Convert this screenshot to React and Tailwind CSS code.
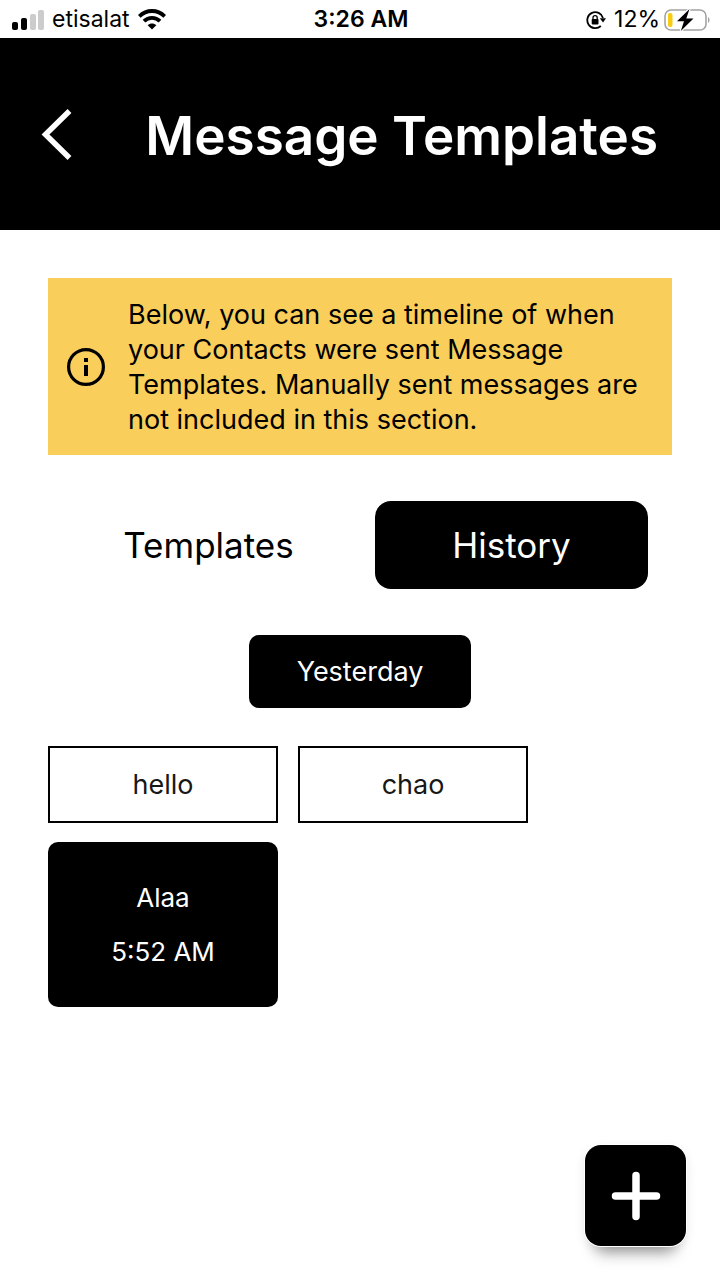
function SignalIcon() {
  return (
    <svg width="32" height="20" viewBox="0 0 32 20" aria-hidden="true">
      <rect x="0" y="12" width="6" height="8" rx="2" fill="#000" />
      <rect x="9" y="8" width="6" height="12" rx="2" fill="#000" />
      <rect x="18" y="4" width="6" height="16" rx="2" fill="#ccc" />
      <rect x="26" y="0" width="6" height="20" rx="2" fill="#ccc" />
    </svg>
  );
}

function WifiIcon() {
  return (
    <svg width="28" height="21" viewBox="0 0 28 21" fill="none" stroke="#000" strokeWidth="3.8" aria-hidden="true">
      <path d="M1.3 7.3C8.5.2 19.5.2 26.7 7.3" />
      <path d="M6 12.1C10.5 7.7 17.500 7.7 22 12.1" />
      <path d="M14 20.6L9.700 16.3C12.1 14 15.9 14 18.3 16.3Z" fill="#000" stroke="none" />
    </svg>
  );
}

function RotationLockIcon() {
  return (
    <svg width="20" height="20" viewBox="0 0 20 20" fill="none" stroke="#000" aria-hidden="true">
      <path d="M14.8 16A8 8 0 1 1 17 8" strokeWidth="1.8" />
      <path d="M13.8 8.300H20L17 12.600Z" fill="#000" stroke="none" />
      <rect x="5.700" y="9" width="6.800" height="5.400" rx="0.800" fill="#000" stroke="none" />
      <path d="M7 9.500V7.800a2.100 2.100 0 0 1 4.200 0V9.500" strokeWidth="1.300" />
    </svg>
  );
}

function BatteryIcon() {
  return (
    <svg width="46" height="24" viewBox="0 0 46 24" aria-hidden="true">
      <rect x="1" y="2" width="41" height="20" rx="6" fill="none" stroke="#a3a3a3" strokeWidth="1.600" />
      <path d="M44 9c2 .8 2 5.200 0 6Z" fill="#a3a3a3" />
      <rect x="4" y="5" width="4.500" height="14" rx="2" fill="#f8cc15" />
      <path d="M25.500 1L13 13.300H20L16.800 23L29.500 10.500H22.300Z" fill="#000" stroke="#fff" strokeWidth="2.400" paintOrder="stroke" />
    </svg>
  );
}

function StatusBar() {
  return (
    <div className="grid h-[38px] grid-cols-3 items-center pl-3 pr-[10px] pt-px text-[23px] leading-none">
      <div className="flex items-center gap-2">
        <SignalIcon />
        <span>etisalat</span>
        <WifiIcon />
      </div>
      <div className="text-center font-semibold">3:26 AM</div>
      <div className="flex items-center justify-end gap-1">
        <RotationLockIcon />
        <span className="pl-1">12%</span>
        <BatteryIcon />
      </div>
    </div>
  );
}

function Header() {
  return (
    <header className="flex h-48 items-center bg-black pl-10 pr-[62px] text-white">
      <button type="button" aria-label="Back" className="shrink-0">
        <svg width="34" height="52" viewBox="0 0 34 52" fill="none" stroke="currentColor" strokeWidth="5.500" aria-hidden="true">
          <path d="M29.500 3L5.500 26.500L29.500 50" />
        </svg>
      </button>
      <h1 className="flex-1 whitespace-nowrap pt-1 text-right text-[53px] font-semibold leading-none">Message Templates</h1>
    </header>
  );
}

function InfoBanner() {
  return (
    <div className="flex items-center gap-[22px] bg-[#f9ce5a] pb-[18px] pl-[18px] pr-6 pt-[19px]">
      <svg className="shrink-0" width="40" height="40" viewBox="0 0 40 40" aria-hidden="true">
        <circle cx="20" cy="20" r="17.400" fill="none" stroke="#000" strokeWidth="3.200" />
        <rect x="18" y="11" width="4" height="4" fill="#000" />
        <rect x="18" y="18" width="4" height="11" fill="#000" />
      </svg>
      <p className="text-[27px] leading-[35px]">
        Below, you can see a timeline of when<br />
        your Contacts were sent Message<br />
        Templates. Manually sent messages are<br />
        not included in this section.
      </p>
    </div>
  );
}

export default function App() {
  return (
    <div className="flex min-h-screen flex-col bg-white font-['Inter',sans-serif] text-black">
      <StatusBar />
      <Header />
      <main className="flex flex-1 flex-col px-12 pt-12">
        <InfoBanner />
        <div role="tablist" className="mt-[46px] grid grid-cols-2 gap-[30px] px-6 text-[35px] leading-none">
          <button type="button" role="tab" aria-selected="false" className="h-[88px] rounded-2xl">Templates</button>
          <button type="button" role="tab" aria-selected="true" className="h-[88px] rounded-2xl bg-black text-white">History</button>
        </div>
        <h2 className="mt-[46px] self-center rounded-[10px] bg-black px-12 py-5 text-[27px] leading-[33px] text-white">Yesterday</h2>
        <section className="mt-[38px] flex flex-col gap-[19px] text-[26px] leading-8">
          <div className="flex gap-5 text-[27px]">
            <button type="button" className="h-[77px] w-[230px] border-2 border-black text-neutral-900">hello</button>
            <button type="button" className="h-[77px] w-[230px] border-2 border-black text-neutral-900">chao</button>
          </div>
          <div className="flex h-[165px] w-[230px] flex-col items-center justify-center gap-[22px] rounded-[10px] bg-black text-white">
            <p>Alaa</p>
            <p>5:52 AM</p>
          </div>
        </section>
      </main>
      <button
        type="button"
        aria-label="Add template"
        className="fixed bottom-[34px] right-[34px] flex size-[101px] items-center justify-center rounded-2xl bg-black text-white shadow-[0_0_0_1px_#fff,0_18px_16px_-12px_rgba(0,0,0,0.4),0_4px_12px_rgba(0,0,0,0.1)]"
      >
        <svg width="50" height="50" viewBox="0 0 50 50" fill="none" stroke="currentColor" strokeWidth="7.500" strokeLinecap="round" aria-hidden="true">
          <path d="M25 4.500V45.500M4.500 25H45.500" />
        </svg>
      </button>
    </div>
  );
}
